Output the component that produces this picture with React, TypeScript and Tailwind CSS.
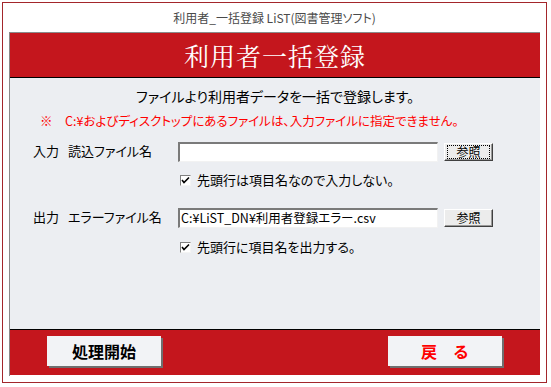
import React from "react";

const jp = "font-['MS_UI_Gothic','Noto_Sans_CJK_JP',sans-serif]";

function Check() {
  return (
    <span className="w-[11px] h-[11px] bg-white border-t border-l border-t-[#808080] border-l-[#808080] border-b border-r border-b-[#f4f4f4] border-r-[#f4f4f4] flex items-center justify-center shrink-0">
      <svg width="9" height="9" viewBox="0 0 9 9">
        <path d="M1 4 L3 6.5 L8 1.5" stroke="#000" strokeWidth="1.6" fill="none" />
      </svg>
    </span>
  );
}

function RefButton({ focus }: { focus?: boolean }) {
  return (
    <div className="w-[49px] h-[18px] bg-[#ececec] border-t border-l border-t-white border-l-white border-b border-r border-b-[#404040] border-r-[#404040] shadow-[inset_-1px_-1px_0_#9a9a9a] flex items-center justify-center">
      <div className={`flex items-center justify-center w-[41px] h-[12px] text-[12px] leading-none text-black ${focus ? "outline outline-1 outline-dotted outline-black" : ""}`}>
        参照
      </div>
    </div>
  );
}

export default function App() {
  return (
    <div className={`w-[551px] h-[387px] bg-white ${jp}`}>
      <div className="absolute left-[2px] top-[2px] w-[545px] h-[381px] border border-[#a3262b] flex flex-col px-[6px]">
        <div className="h-[29px] flex items-center justify-center text-[12px] text-[#4a4a4a] pt-[1px] [font-feature-settings:'palt']">
          利用者_一括登録 LiST(図書管理ソフト)
        </div>
        <div className="w-[531px] h-[344px] border-t border-l border-[#8a8a8a] flex flex-col">
          <div className="h-[45px] bg-[#c4161d] border-b border-black flex items-center justify-center">
            <span className="text-white text-[25px] leading-none font-['Noto_Serif_CJK_JP','Noto_Sans_CJK_JP',serif] tracking-[1px]">
              利用者一括登録
            </span>
          </div>
          <div className="h-[252px] bg-[#eceef2] border-b border-black flex flex-col text-black [font-feature-settings:'palt']">
            <div className="pt-[10px] h-[26px] text-[14px] leading-[16px] text-center">
              ファイルより利用者データを一括で登録します。
            </div>
            <div className="mt-[9px] h-[16px] pl-[30px] text-[12.5px] leading-[16px] text-[#ff0000]">
              ※　C:¥およびディスクトップにあるファイルは、入力ファイルに指定できません。
            </div>
            <div className="mt-[13px] h-[20px] flex items-center pl-[23px]">
              <span className="w-[35px] text-[13px] -mt-[2px]">入力</span>
              <span className="w-[110px] text-[13px] -mt-[2px]">読込ファイル名</span>
              <div className="w-[260px] h-[20px] bg-white border-t-2 border-l-2 border-t-[#7a7a7a] border-l-[#7a7a7a] border-b border-r border-b-[#f2f2f2] border-r-[#f2f2f2]" />
              <div className="ml-[6px]">
                <RefButton focus />
              </div>
            </div>
            <div className="mt-[10px] h-[16px] flex items-center pl-[170px] gap-[6px] text-[13px]">
              <Check />
              <span>先頭行は項目名なので入力しない。</span>
            </div>
            <div className="mt-[20px] h-[20px] flex items-center pl-[23px]">
              <span className="w-[35px] text-[13px] -mt-[2px]">出力</span>
              <span className="w-[110px] text-[13px] -mt-[2px]">エラーファイル名</span>
              <div className="w-[260px] h-[20px] bg-white border-t-2 border-l-2 border-t-[#7a7a7a] border-l-[#7a7a7a] border-b border-r border-b-[#f2f2f2] border-r-[#f2f2f2] flex items-center pl-[1px] text-[12.5px] leading-none">
                C:¥LiST_DN¥利用者登録エラー.csv
              </div>
              <div className="ml-[6px]">
                <RefButton />
              </div>
            </div>
            <div className="mt-[11px] h-[16px] flex items-center pl-[170px] gap-[6px] text-[13px]">
              <Check />
              <span>先頭行に項目名を出力する。</span>
            </div>
          </div>
          <div className="h-[45px] bg-[#c4161d] flex items-start justify-between pl-[37px] pr-[38px] pt-[6px]">
            <div className="w-[114px] h-[30px] bg-[#f2f3f6] shadow-[2px_2px_0_#6f6f6f] flex items-center justify-center text-[16px] font-bold text-black">
              処理開始
            </div>
            <div className="w-[114px] h-[30px] bg-[#f2f3f6] shadow-[2px_2px_0_#6f6f6f] flex items-center justify-center text-[16px] font-bold text-[#ff0000]">
              戻　る
            </div>
          </div>
        </div>
      </div>
    </div>
  );
}
